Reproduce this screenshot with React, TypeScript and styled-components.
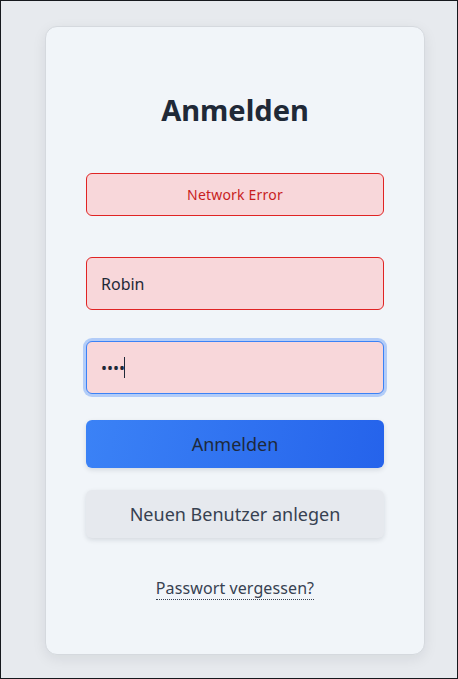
import React from "react";
import styled, { createGlobalStyle, css } from "styled-components";

const GlobalStyle = createGlobalStyle`
  * { box-sizing: border-box; }
  html, body { margin: 0; padding: 0; }
  body {
    font-family: "Noto Sans", "Open Sans", Arial, sans-serif;
    color: #1f2937;
  }
`;

const Page = styled.div`
  width: 458px;
  height: 679px;
  border: 1px solid #16191d;
  background: #e7eaee;
  padding: 25px 0 0 44px;
  overflow: hidden;
`;

const Card = styled.div`
  width: 380px;
  height: 629px;
  background: #f1f5f9;
  border: 1px solid #d5d9de;
  border-radius: 12px;
  box-shadow: 0 4px 14px rgba(15, 23, 42, 0.08);
  padding: 55px 40px 40px;
  display: flex;
  flex-direction: column;
`;

const Title = styled.h1`
  margin: 0 0 35px;
  text-align: center;
  font-size: 29px;
  line-height: 56px;
  font-weight: 700;
  color: #1f2937;
`;

const ErrorBox = styled.div`
  height: 43px;
  display: flex;
  align-items: center;
  justify-content: center;
  background: #f8d7da;
  border: 1px solid #e02424;
  border-radius: 6px;
  color: #c81e1e;
  font-size: 14px;
  letter-spacing: 0.2px;
  margin-bottom: 41px;
`;

const FieldBox = styled.div<{ $focused?: boolean }>`
  position: relative;
  margin-bottom: ${(p) => (p.$focused ? 26 : 31)}px;
`;

const Field = styled.input<{ $focused?: boolean }>`
  display: block;
  height: 53px;
  width: 100%;
  padding: 0 14px;
  background: #f8d7da;
  border: 1px solid #e02424;
  border-radius: 6px;
  font-family: "Noto Sans", "Open Sans", Arial, sans-serif;
  font-size: 16px;
  color: #1f2937;
  outline: none;
  ${(p) =>
    p.$focused &&
    css`
      border-color: #3b82f6;
      box-shadow: 0 0 0 3px rgba(59, 130, 246, 0.35);
    `}
`;

const Caret = styled.span<{ $left: number }>`
  position: absolute;
  top: 16px;
  left: ${(p) => p.$left}px;
  width: 1px;
  height: 21px;
  background: #1f2937;
`;

const Button = styled.button<{ $primary?: boolean }>`
  height: 48px;
  width: 100%;
  border: none;
  border-radius: 6px;
  font-family: "Noto Sans", "Open Sans", Arial, sans-serif;
  font-size: 18px;
  cursor: pointer;
  box-shadow: 0 2px 5px rgba(15, 23, 42, 0.12);
  margin-bottom: 22px;
  ${(p) =>
    p.$primary
      ? css`
          background: linear-gradient(100deg, #3b82f6 0%, #2563eb 100%);
          color: #1e293b;
        `
      : css`
          background: #e6e9ee;
          color: #374151;
        `}
`;

const LinkRow = styled.div`
  display: flex;
  justify-content: center;
  margin-top: 17px;
`;

const Link = styled.a`
  font-size: 16px;
  letter-spacing: 0.1px;
  color: #374151;
  text-decoration: none;
  border-bottom: 1px dotted #374151;
  line-height: 22px;
  cursor: pointer;
`;

export default function App() {
  return (
    <>
      <GlobalStyle />
      <Page>
        <Card>
          <Title>Anmelden</Title>
          <ErrorBox>Network Error</ErrorBox>
          <FieldBox>
            <Field type="text" defaultValue="Robin" />
          </FieldBox>
          <FieldBox $focused>
            <Field type="password" defaultValue="abcd" $focused />
            <Caret $left={38} />
          </FieldBox>
          <Button $primary>Anmelden</Button>
          <Button>Neuen Benutzer anlegen</Button>
          <LinkRow>
            <Link>Passwort vergessen?</Link>
          </LinkRow>
        </Card>
      </Page>
    </>
  );
}
